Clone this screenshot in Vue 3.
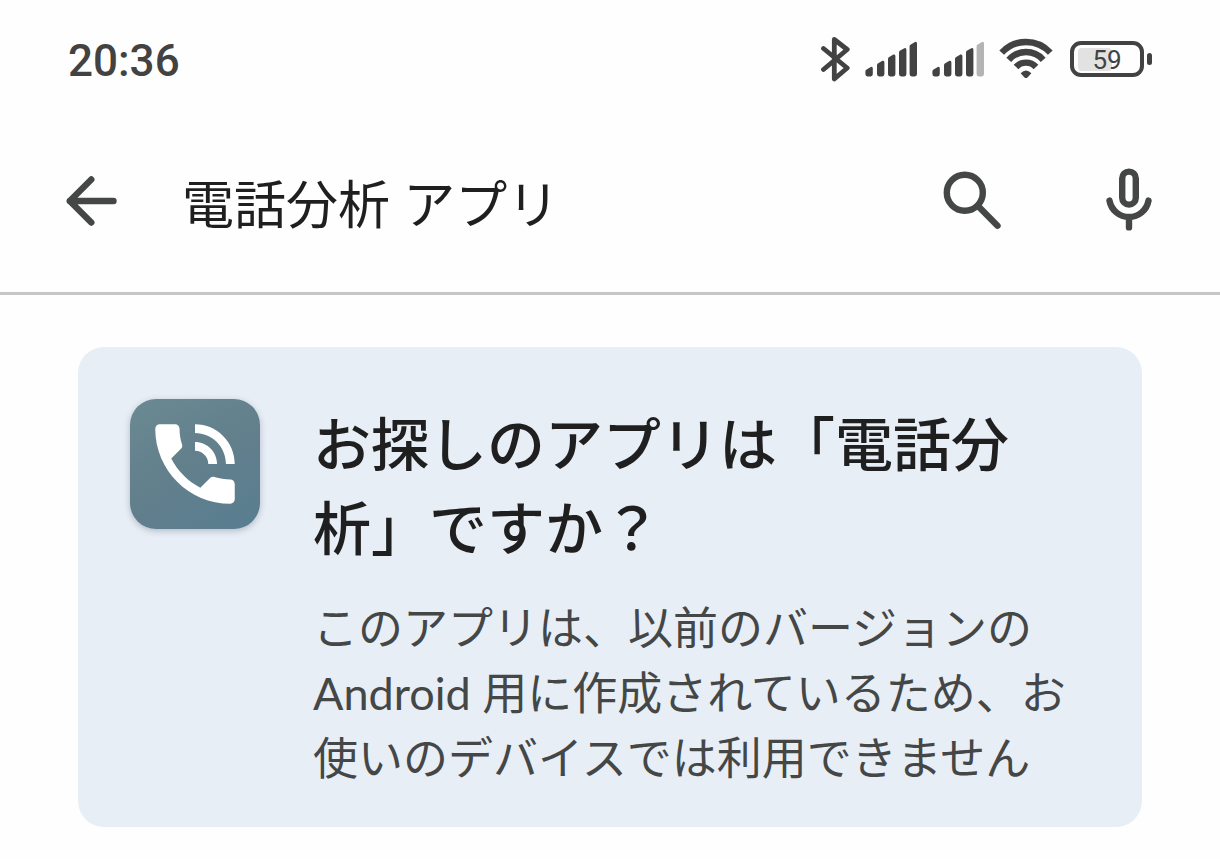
<template>
  <div class="screen">
    <div class="status">
      <time class="status__time">20:36</time>
      <div class="status__icons">
        <svg class="status__icon" width="30" height="46" viewBox="0 0 30 46" fill="none" stroke-width="4.8" stroke-linecap="round" stroke-linejoin="round">
          <path d="M3.5 12.5 27.2 32 14.3 43V3.5L27.2 13.5 3.5 33.5" />
        </svg>
        <svg
        v-for="signal in signals"
        :key="signal.name"
        class="status__signal"
        width="52" height="36" viewBox="0 0 52 36">
          <path
          v-for="(bar, index) in bars"
          :key="bar"
          :class="{ 'status__bar--off': index >= signal.level }"
          :d="bar" />
        </svg>
        <svg class="status__icon" width="55" height="42" viewBox="0 0 55 42" fill="none" stroke-width="6.4" stroke-linejoin="round">
          <path d="M2.7 14.6A33 33 0 0 1 51.3 14.6" />
          <path d="M9.8 21.8A23 23 0 0 1 44.2 21.8" />
          <path d="M17 29A13.6 13.6 0 0 1 37 29" />
          <path class="status__dot" d="M21.6 35.3Q27 29.5 32.4 35.3L28.5 39.4Q27 40.8 25.5 39.4Z" />
        </svg>
        <div class="battery">
          <div class="battery__body">
            <div class="battery__level" :style="{ width: battery + '%' }"></div>
            <span class="battery__text">{{ battery }}</span>
          </div>
          <div class="battery__cap"></div>
        </div>
      </div>
    </div>

    <header class="search">
      <button class="search__button" type="button" aria-label="戻る">
        <svg width="52" height="50" viewBox="0 0 52 50">
          <path d="M47.5 25H3.8M25.3 3.5 3.8 25 25.3 46.5" />
        </svg>
      </button>
      <input class="search__input" type="text" aria-label="検索" v-model="query">
      <button class="search__button" type="button" aria-label="検索する">
        <svg width="58" height="60" viewBox="0 0 58 60">
          <circle cx="21.8" cy="21.8" r="18" />
          <path d="M35 35 54.5 54.7" />
        </svg>
      </button>
      <button class="search__button search__button--mic" type="button" aria-label="音声検索">
        <svg width="46" height="66" viewBox="0 0 46 66">
          <rect x="16.2" y="3.6" width="13.6" height="33" rx="6.8" />
          <path d="M3.5 32.6A19.8 19.8 0 0 0 42.5 32.6M23 49V59.4" />
        </svg>
      </button>
    </header>

    <main class="results">
      <section class="card">
        <div class="card__logo">
          <svg width="106" height="106" viewBox="0 0 24 24">
            <path fill="#fff" d="M20 15.5c-1.25 0-2.45-.2-3.57-.57-.35-.11-.74-.03-1.02.24l-2.2 2.2c-2.83-1.44-5.15-3.75-6.59-6.59l2.2-2.21c.28-.26.36-.65.25-1C8.7 6.45 8.5 5.25 8.5 4c0-.55-.45-1-1-1H4c-.55 0-1 .45-1 1 0 9.39 7.61 17 17 17 .55 0 1-.45 1-1v-3.5c0-.55-.45-1-1-1zM19 12h2c0-4.97-4.03-9-9-9v2c3.87 0 7 3.13 7 7zm-4 0h2c0-2.76-2.24-5-5-5v2c1.66 0 3 1.34 3 3z" />
          </svg>
        </div>
        <div class="card__content">
          <h1 class="card__title">お探しのアプリは「電話分析」ですか？</h1>
          <p class="card__text">このアプリは、以前のバージョンの Android 用に作成されているため、お使いのデバイスでは利用できません</p>
        </div>
      </section>
    </main>
  </div>
</template>

<script setup>
import { ref } from 'vue';

  const query = ref('電話分析 アプリ')
  const battery = ref(59)

  const signals = [
    { name: 'sim1', level: 5 },
    { name: 'sim2', level: 4 }
  ]

  // one bar of the signal icon: slanted top, rounded foot
  const makeBar = (x, top) =>
    `M${x} ${top + 4.4}Q${x} ${top + 3} ${x + 1.2} ${top + 2.4}L${x + 5.4} ${top}Q${x + 7.4} ${top - 0.6} ${x + 7.4} ${top + 1.6}V33Q${x + 7.4} 35.4 ${x + 5.2} 35.4H${x + 2.2}Q${x} 35.4 ${x} 33Z`

  const bars = [
    makeBar(0.4, 26),
    makeBar(12, 19.8),
    makeBar(23, 13.6),
    makeBar(34, 7.2),
    makeBar(44.6, 1)
  ]
</script>

<style>
  body{
    background: #fefefe;
  }
</style>

<style scoped>
  .screen{
    font-family: Lato, "Noto Sans CJK JP", sans-serif;
    color: #1f1f1f;
  }

  .status{
    display: flex;
    align-items: center;
    justify-content: space-between;
    height: 118px;
    padding: 0 68px;
  }

  .status__time{
    padding-top: 4px;
    font: 500 44px/60px Roboto, sans-serif;
    color: #424242;
  }

  .status__icons{
    display: flex;
    align-items: center;
    gap: 15px;
  }

  .status__icon{
    stroke: #424242;
  }

  .status__signal{
    fill: #424242;
  }

  .status__bar--off{
    fill: #b4b4b4;
  }

  .status__dot{
    fill: #424242;
    stroke: none;
  }

  .battery{
    display: flex;
    align-items: center;
    gap: 3px;
    margin-left: 1px;
  }

  .battery__body{
    display: grid;
    align-items: center;
    box-sizing: border-box;
    width: 74px;
    height: 36px;
    padding: 0 4px;
    border: 4px solid #424242;
    border-radius: 11px;
  }

  .battery__level{
    grid-area: 1 / 1;
    height: 23px;
    border-radius: 4px;
    background: #e2e2e2;
  }

  .battery__text{
    grid-area: 1 / 1;
    padding-top: 2px;
    font: 400 26px/26px Roboto, sans-serif;
    color: #424242;
    text-align: center;
  }

  .battery__cap{
    width: 5px;
    height: 12px;
    border-radius: 3px;
    background: #424242;
  }

  .search{
    display: flex;
    align-items: center;
    padding: 40px 68px 48px 66px;
    border-bottom: 3px solid #c6c6c6;
  }

  .search__button{
    display: flex;
    padding: 0;
    border: 0;
    background: none;
  }

  .search__button svg{
    fill: none;
    stroke: #444746;
    stroke-width: 6.4;
    stroke-linecap: round;
    stroke-linejoin: round;
  }

  .search__button--mic{
    margin-left: 105px;
  }

  .search__input{
    flex: 1;
    min-width: 0;
    height: 86px;
    margin-left: 64px;
    padding: 0;
    border: 0;
    outline: 0;
    background: none;
    color: #1f1f1f;
    font-family: inherit;
    font-size: 52px;
  }

  .results{
    padding: 52px 78px 32px;
  }

  .card{
    display: flex;
    align-items: flex-start;
    gap: 53px;
    padding: 52px 52px 36px;
    border-radius: 26px;
    background: #e8eef6;
  }

  .card__logo{
    display: flex;
    flex: none;
    align-items: center;
    justify-content: center;
    width: 130px;
    height: 130px;
    border-radius: 26px;
    background: linear-gradient(150deg, #6a8a92, #627f8c 50%, #587e90);
    box-shadow: 0 2px 6px rgba(60, 70, 90, 0.3);
  }

  .card__content{
    flex: 1;
    min-width: 0;
    padding-top: 3px;
  }

  .card__title{
    margin: 0;
    padding-right: 26px;
    font-size: 58px;
    font-weight: 500;
    line-height: 84px;
  }

  .card__text{
    margin: 26px 0 0;
    color: #444746;
    font-size: 45px;
    line-height: 65px;
  }
</style>
